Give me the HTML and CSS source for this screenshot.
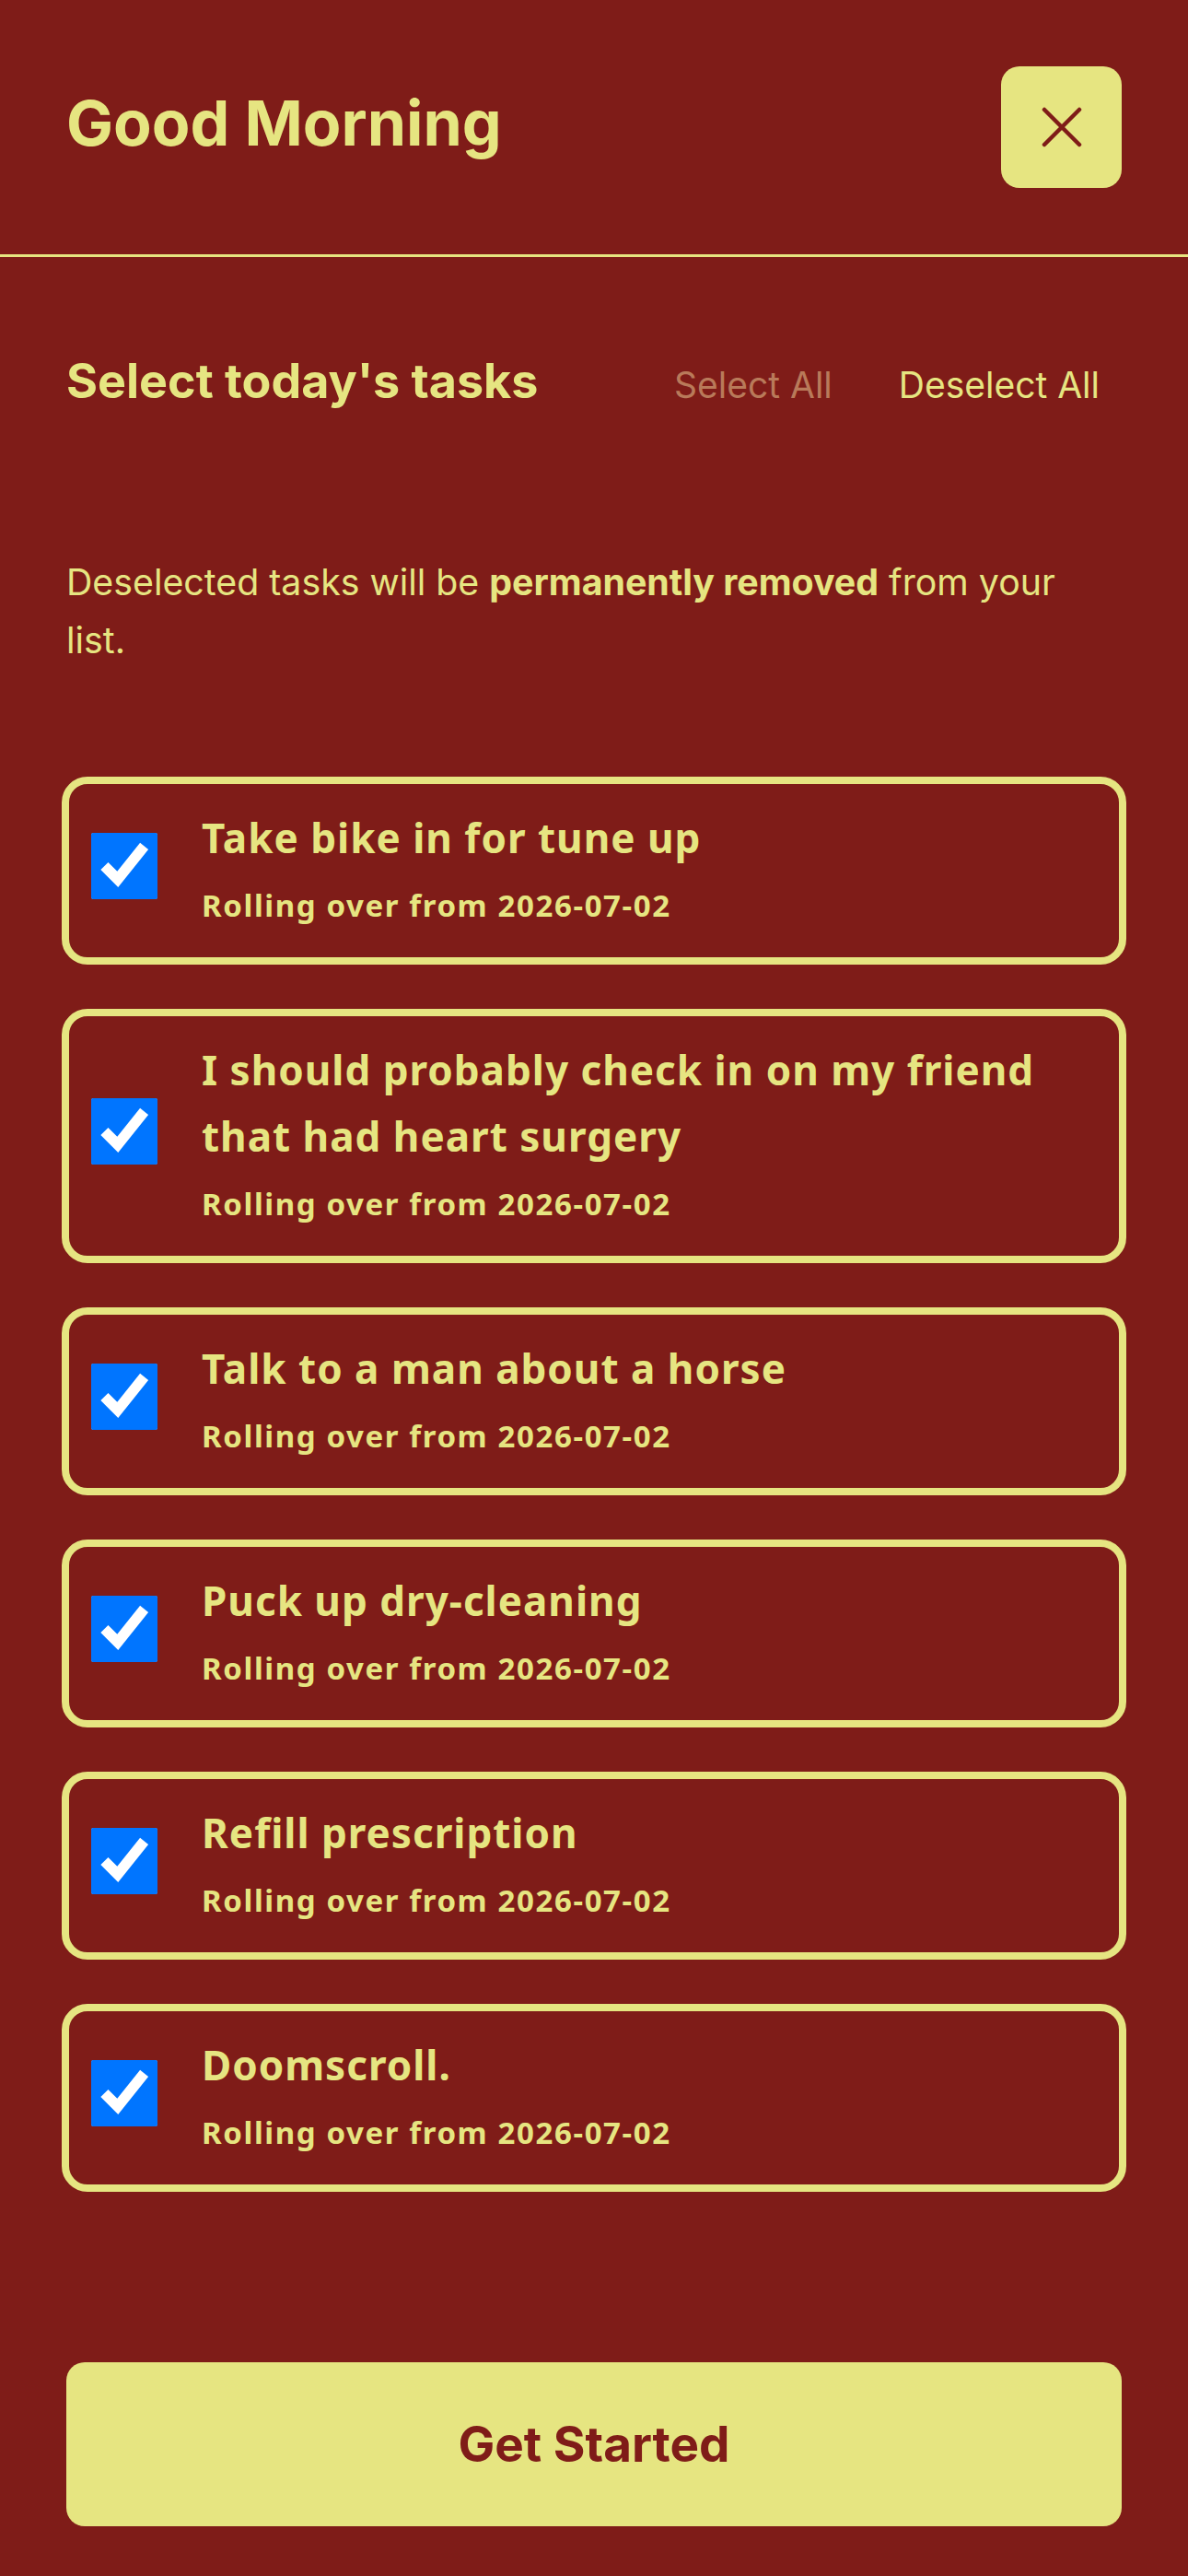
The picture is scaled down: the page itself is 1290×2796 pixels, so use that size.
FILE: index.html
```html
<!DOCTYPE html>
<html lang="en">
<head>
    <meta charset="UTF-8">
    <meta name="viewport" content="width=device-width, initial-scale=1.0">
    <title>Good Morning</title>
    <link rel="stylesheet" href="styles.css">
</head>
<body>
    <header class="top-bar">
        <h1>Good Morning</h1>
        <button class="close-btn" aria-label="Close">
            <svg width="44" height="44" viewBox="0 0 44 44">
                <path d="M3 3 L41 41 M41 3 L3 41" stroke="#7f1c18" stroke-width="4.5" stroke-linecap="round" fill="none"/>
            </svg>
        </button>
    </header>

    <main class="content">
        <div class="tasks-head">
            <h2>Select today's tasks</h2>
            <div class="bulk-actions">
                <button class="link-btn muted">Select All</button>
                <button class="link-btn">Deselect All</button>
            </div>
        </div>

        <p class="note">Deselected tasks will be <strong>permanently removed</strong> from your list.</p>

        <!-- rolled-over tasks -->
        <ul class="task-list">
            <li class="task">
                <input type="checkbox" checked>
                <div class="task-text">
                    <div class="task-title">Take bike in for tune up</div>
                    <div class="task-meta">Rolling over from 2026-07-02</div>
                </div>
            </li>
            <li class="task">
                <input type="checkbox" checked>
                <div class="task-text">
                    <div class="task-title">I should probably check in on my friend that had heart surgery</div>
                    <div class="task-meta">Rolling over from 2026-07-02</div>
                </div>
            </li>
            <li class="task">
                <input type="checkbox" checked>
                <div class="task-text">
                    <div class="task-title">Talk to a man about a horse</div>
                    <div class="task-meta">Rolling over from 2026-07-02</div>
                </div>
            </li>
            <li class="task">
                <input type="checkbox" checked>
                <div class="task-text">
                    <div class="task-title">Puck up dry-cleaning</div>
                    <div class="task-meta">Rolling over from 2026-07-02</div>
                </div>
            </li>
            <li class="task">
                <input type="checkbox" checked>
                <div class="task-text">
                    <div class="task-title">Refill prescription</div>
                    <div class="task-meta">Rolling over from 2026-07-02</div>
                </div>
            </li>
            <li class="task">
                <input type="checkbox" checked>
                <div class="task-text">
                    <div class="task-title">Doomscroll.</div>
                    <div class="task-meta">Rolling over from 2026-07-02</div>
                </div>
            </li>
        </ul>

        <button class="start-btn">Get Started</button>
    </main>
</body>
</html>
```

FILE: styles.css
```css
body {
    margin: 0;
    background-color: #7f1c18;
    color: #e6e581;
    font-family: Inter, "Noto Sans", sans-serif;
}
.top-bar {
    display: flex;
    justify-content: space-between;
    align-items: center;
    padding: 72px;
    border-bottom: 3px solid #e6e581;
}
.top-bar h1 {
    margin: 0 0 10px;
    font-size: 68px;
    font-weight: 700;
    line-height: 1.1;
}
.close-btn {
    width: 131px;
    height: 132px;
    border: none;
    border-radius: 20px;
    background-color: #e6e581;
    display: flex;
    align-items: center;
    justify-content: center;
    cursor: pointer;
}
.content {
    padding: 0 72px;
}
.tasks-head {
    display: flex;
    justify-content: space-between;
    align-items: baseline;
    margin-top: 104px;
}
.tasks-head h2 {
    margin: 0;
    font-size: 52px;
    font-weight: 700;
    line-height: 1.2;
}
.bulk-actions {
    display: flex;
    gap: 24px;
}
.link-btn {
    background: none;
    border: none;
    padding: 0 24px;
    color: #e6e581;
    font-family: Inter, "Noto Sans", sans-serif;
    font-size: 39px;
    cursor: pointer;
}
.link-btn.muted {
    color: #b97a5a;
}
.note {
    margin: 155px 0 0;
    font-size: 39.3px;
    line-height: 63px;
}
.task-list {
    list-style: none;
    margin: 117px -5px 0;
    padding: 0;
    display: flex;
    flex-direction: column;
    gap: 48px;
}
.task {
    display: flex;
    align-items: center;
    gap: 48px;
    padding: 22px 28px 32px 24px;
    border: 8px solid #e6e581;
    border-radius: 28px;
    font-family: "Noto Sans", sans-serif;
}
.task input {
    flex: none;
    width: 72px;
    height: 72px;
    margin: 0;
}
.task-title {
    font-size: 44px;
    font-weight: 700;
    line-height: 72px;
    letter-spacing: 1px;
}
.task-meta {
    margin-top: 14px;
    font-size: 33px;
    font-weight: 700;
    line-height: 48px;
    letter-spacing: 1.6px;
}
.start-btn {
    display: block;
    width: 100%;
    height: 178px;
    margin-top: 185px;
    border: none;
    border-radius: 20px;
    background-color: #e6e581;
    color: #7f1c18;
    font-family: Inter, "Noto Sans", sans-serif;
    font-size: 53px;
    font-weight: 700;
    cursor: pointer;
}
```
